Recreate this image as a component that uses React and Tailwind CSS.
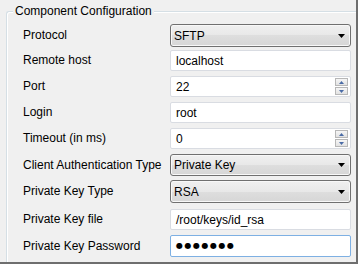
import React from 'react';

const Arrow = () => (
  <svg width="7" height="4" viewBox="0 0 7 4" className="absolute right-[5px] top-1/2 -translate-y-1/2">
    <path d="M0 0H7L3.5 4Z" fill="#000" />
  </svg>
);

const Combo = ({ value, h = 'h-[23px]' }) => (
  <div className={`relative w-[181px] ${h} rounded-[3px] border border-[#707070] bg-[linear-gradient(#f0f0f0,#e8e8e8_50%,#dedede_50%,#d6d6d6)] shadow-[inset_0_0_0_1px_#f8f8f8] flex items-center pl-[3px]`}>
    <span>{value}</span>
    <Arrow />
  </div>
);

const Field = ({ children, focused, spin, h = 'h-[21px]' }) => (
  <div
    className={`relative w-[181px] ${h} rounded-[2px] border bg-white flex items-center pl-[5px] ${
      focused ? 'border-[#7eb0e3]' : 'border-[#d9dce2]'
    }`}
  >
    {children}
    {spin && (
      <div className="absolute right-[2px] top-[1px] flex flex-col gap-px">
        <div className="w-[13px] h-[8px] border border-[#b7b7b7] bg-[linear-gradient(#f6f6f6,#e2e2e2)] flex items-center justify-center">
          <svg width="5" height="3" viewBox="0 0 5 3">
            <path d="M0 3H5L2.5 0Z" fill="#4a6ba6" />
          </svg>
        </div>
        <div className="w-[13px] h-[8px] border border-[#b7b7b7] bg-[linear-gradient(#f6f6f6,#e2e2e2)] flex items-center justify-center">
          <svg width="5" height="3" viewBox="0 0 5 3">
            <path d="M0 0H5L2.5 3Z" fill="#4a6ba6" />
          </svg>
        </div>
      </div>
    )}
  </div>
);

const Row = ({ label, children, className = '' }) => (
  <div className={`flex items-center ${className}`}>
    <div className="w-[147px] leading-[15px]">{label}</div>
    {children}
  </div>
);

export default function App() {
  return (
    <div className="w-[358px] h-[264px] overflow-hidden bg-[#f0f0f0] border-r-2 border-b-2 border-[#6e6e6e] font-['Liberation_Sans',Arial,sans-serif] text-[12px] text-black">
      <div className="relative ml-[6px] mt-[11px] h-[300px] border-t border-l border-[#d5dfe5] rounded-tl-[3px] shadow-[inset_1px_1px_0_#ffffff] pl-[16px] pt-[12px]">
        <span className="absolute left-[6px] top-[-8px] bg-[#f0f0f0] px-[2px] leading-[15px]">
          Component Configuration
        </span>
        <Row label="Protocol">
          <Combo value="SFTP" />
        </Row>
        <Row label="Remote host" className="mt-[3px]">
          <Field>localhost</Field>
        </Row>
        <Row label="Port" className="mt-[5px]">
          <Field spin>22</Field>
        </Row>
        <Row label="Login" className="mt-[5px]">
          <Field>root</Field>
        </Row>
        <Row label="Timeout (in ms)" className="mt-[5px]">
          <Field spin>0</Field>
        </Row>
        <Row label="Client Authentication Type" className="mt-[5px]">
          <Combo value="Private Key" h="h-[22px]" />
        </Row>
        <Row label="Private Key Type" className="mt-[4px]">
          <Combo value="RSA" />
        </Row>
        <Row label="Private Key file" className="mt-[6px]">
          <Field>/root/keys/id_rsa</Field>
        </Row>
        <Row label="Private Key Password" className="mt-[5px]">
          <Field focused h="h-[22px]">
            <span className="font-['DejaVu_Sans',sans-serif] text-[8px] tracking-[1.5px] leading-none">●●●●●●●</span>
          </Field>
        </Row>
      </div>
    </div>
  );
}
